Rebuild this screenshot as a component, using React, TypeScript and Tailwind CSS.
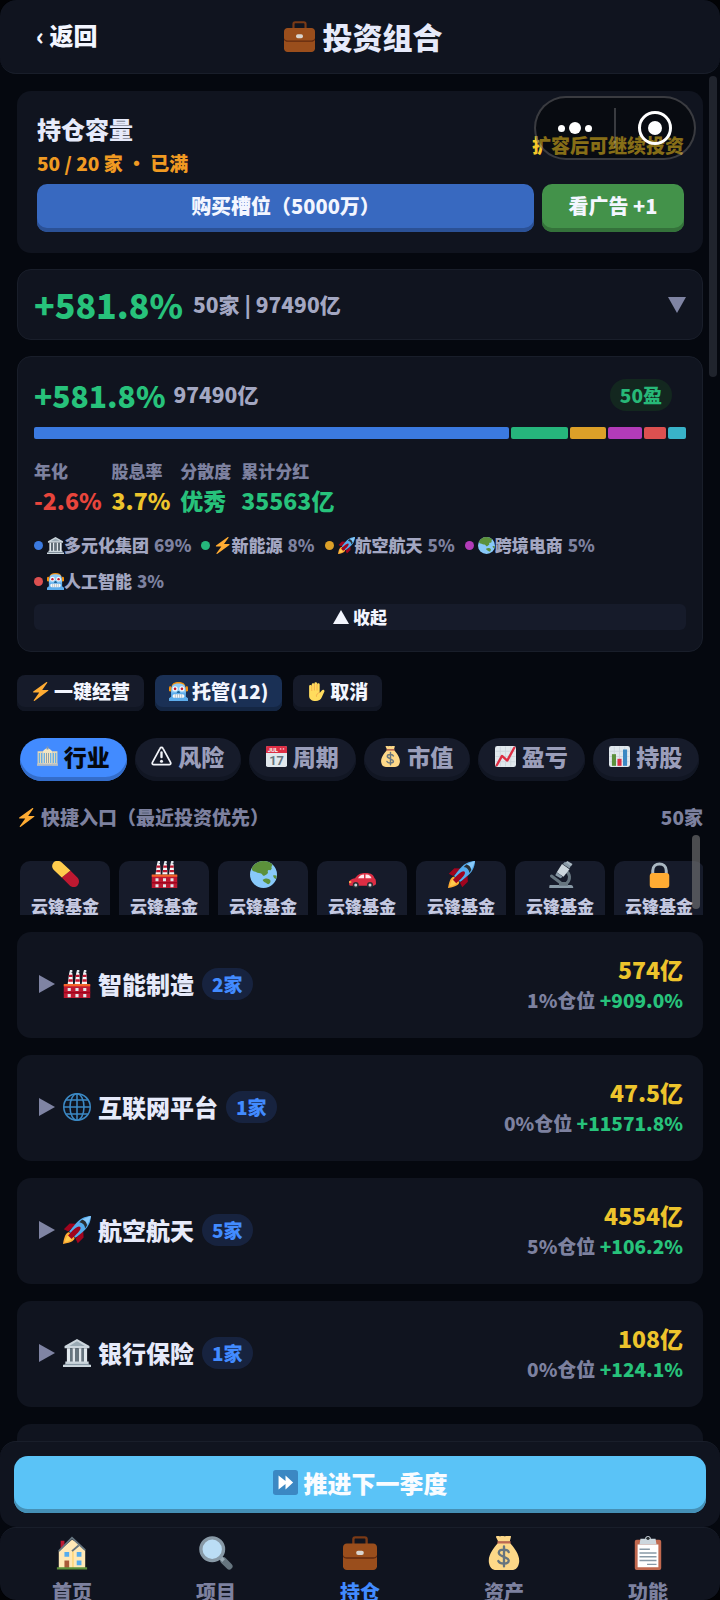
import React, { useState } from "react"
import clsx from "clsx"

type IconProps = {
  name: string
  className?: string
}

const glyphs: Record<string, React.ReactNode> = {
  briefcase: (
    <>
      <path
        fill="none"
        stroke="#7A3A16"
        strokeWidth="2.500"
        d="M11 9V3.500C11 2 12 1.500 13 1.500h10c1 0 2 .5 2 2V9"
      />
      <path fill="#9A4E1C" d="M4 8h28c2 0 4 1.500 4 4v20c0 2.500-2 4-4 4H4c-2 0-4-1.500-4-4V12c0-2.500 2-4 4-4z" />
      <path fill="#622A0F" d="M0 20c1 2 2.500 2.500 4 2.500h28c1.500 0 3-.5 4-2.500v2c-1 1.500-2.500 2-4 2H4c-1.500 0-3-.5-4-2z" />
      <rect x="14" y="15.500" width="8" height="4.500" rx="2" fill="#D9D5D0" />
    </>
  ),
  bank: (
    <>
      <path fill="#CCD6DD" d="M18 0 2 9v3h32V9z" />
      <path fill="#9AAAB4" d="M18 3 8 9h20z" />
      <path fill="#E1E8ED" d="M5 12h4v18H5zM12 12h4v18h-4zM20 12h4v18h-4zM27 12h4v18h-4z" />
      <path fill="#66757F" d="M9 12h3v18H9zM16 12h4v18h-4zM24 12h3v18h-3z" />
      <path fill="#CCD6DD" d="M3 29h30v3H3zM0 33h36v3H0z" />
      <path fill="#8899A6" d="M2 32h32v1.500H2z" />
    </>
  ),
  zap: (
    <path
      fill="#FFAC33"
      d="M32.900 15.600c-.2-.4-.6-.6-1-.6H21.200L30.800 1.600c.3-.4.2-.8-.1-1.200-.4-.4-1-.5-1.400-.2L4.300 18.200c-.4.3-.5.800-.3 1.200.1.400.5.600 1 .6h10.600L5.200 34.400c-.3.400-.3.900.1 1.300.4.300.9.400 1.300.1l26-19.100c.3-.3.500-.7.300-1.100z"
    />
  ),
  rocket: (
    <>
      <path fill="#A0041E" d="M1 17 8.500 9.500 17 10 7 20zM19 35l7.500-7.500L26 19 16 29z" />
      <path fill="#55ACEE" d="M36 0s-10 0-17 7c-5 5-11 13-11 13l8 8s8-6 13-11C36 10 36 0 36 0z" />
      <path fill="#FFAC33" d="M8 21c-3 0-6 3-8 15 12-2 15-5 15-8-2-2-5-5-7-7z" />
      <path fill="#FFCC4D" d="M7.500 24c-2 1-4 4-5 9.500C8 32.500 11 30.500 12 28.500z" />
      <path fill="#A0041E" d="M20.500 13.500c1.500 0 2.500 1 2 3-1 4-8.500 10-11.500 13l-4.500-4.500c3-3 8-10 14-11.500z" />
      <path fill="#292F33" d="M24 5c3-1 6 2 7 7l-2.500 4c-.5-4.500-3-7.500-7.500-8z" />
      <path fill="#88C9F9" d="M25 5c4-3 11-5 11-5s-2 7-5 11c0-3-3-6-6-6z" />
    </>
  ),
  earth: (
    <>
      <circle cx="18" cy="18" r="18" fill="#88C9F9" />
      <path
        fill="#5C913B"
        d="M2 10C5 4 11 0 18 0c5 0 10 2 12 5-1 2-2 3-1 5-1 2-2 3-3 2-2 0-3 1-2 3 0 2-2 3-4 4-1 1-2 1-3 0-1-2-3-3-5-3-3 0-4-2-6-2S3 13 2 10zM17 25c3-2 6-2 8-1 3 1 3 4 1 6-2 2-3 0-5-1s-4-2-4-4zM31 19c2 0 3 0 4.500 1l-1 4c-2-1-4-3-3.500-5z"
      />
    </>
  ),
  robot: (
    <>
      <path fill="#F4900C" d="M18 0C10 0 6 3 5 8h26C30 3 26 0 18 0z" />
      <rect x="0" y="8" width="5" height="10" rx="2.500" fill="#F4900C" />
      <rect x="31" y="8" width="5" height="10" rx="2.500" fill="#F4900C" />
      <path fill="#8CCAF7" d="M8 5c5-3 15-3 20 0 4 3 4 9 4 18H4C4 14 4 8 8 5z" />
      <path fill="#5DADEC" d="M4 20h28v8l4 3v5H0v-5l4-3z" />
      <circle cx="11.500" cy="13" r="5" fill="#F5F8FA" />
      <circle cx="24.500" cy="13" r="5" fill="#F5F8FA" />
      <circle cx="11.500" cy="13" r="2.500" fill="#BE1931" />
      <circle cx="24.500" cy="13" r="2.500" fill="#BE1931" />
      <path fill="#226699" d="M16.500 17h3l2 4h-7z" />
      <rect x="7" y="23" width="22" height="7" rx="3" fill="#F5F8FA" />
      <path stroke="#8899A6" strokeWidth="1" d="M12 23v7M16 23v7M20 23v7M24 23v7" />
    </>
  ),
  hand: (
    <>
      <path
        fill="#FFDC5D"
        d="M4 20V8c0-3 5-3 5 0V4.500c0-3 5-3 5 0V2.500c0-3 5-3 5 0V4.500c0-3 5-3 5 0V21l4-5c2-3 6-1 5 2l-5 11c-2 5-6 7-11 7C8 36 4 32 4 26z"
      />
      <path fill="none" stroke="#EF9645" strokeWidth="1.200" d="M9 8v9M14 4v12M19 4v12M24 20c-4 1-7 4-6 8" />
    </>
  ),
  city: (
    <>
      <path fill="#E8D9B5" d="M1 9h9v24H1zM26 9h9v24h-9z" />
      <path fill="#F3E5C2" d="M10 9c2-3 5-4 8-6 3 2 6 3 8 6v23H10z" />
      <path fill="#5DADEC" d="M3 12h2v17H3zM7 12h2v17H7zM11.500 12h2v17h-2zM22.500 12h2v17h-2zM27 12h2v17h-2zM31 12h2v17h-2z" />
      <path fill="#8899A6" d="M15.500 12h1.500v17h-1.500zM19 12h1.500v17H19zM16.500 1h3v5h-3z" />
      <path fill="#B6BEC5" d="M0 30h36v4H0z" />
    </>
  ),
  warning: (
    <>
      <path
        fill="none"
        stroke="#F3F5FA"
        strokeWidth="3"
        strokeLinejoin="round"
        d="M15.500 4c1-2 4-2 5 0l13 24c1 2 0 4-2.500 4H5c-2.500 0-3.500-2-2.500-4z"
      />
      <path stroke="#F3F5FA" strokeWidth="4" strokeLinecap="round" d="M18 11v8" />
      <circle cx="18" cy="26" r="2.600" fill="#F3F5FA" />
    </>
  ),
  calendar: (
    <>
      <rect width="36" height="36" rx="3" fill="#E1E8ED" />
      <path fill="#DD2E44" d="M3 0h30c2 0 3 1.500 3 3v9H0V3c0-1.500 1-3 3-3z" />
      <circle cx="25" cy="5" r="1.500" fill="#F4ABBA" />
      <circle cx="30" cy="5" r="1.500" fill="#F4ABBA" />
      <text x="3" y="10" fill="#F5F8FA" fontSize="10" fontWeight="700" fontFamily="Roboto, sans-serif">
        JUL
      </text>
      <text
        x="18"
        y="32"
        fill="#66757F"
        fontSize="22"
        fontWeight="700"
        textAnchor="middle"
        fontFamily="Roboto, sans-serif"
      >
        17
      </text>
    </>
  ),
  money: (
    <>
      <path fill="#FDD888" d="M10 0c2-1 3 1 5 0s3 1 5 0 4-1 5.500.5L24 6H12L9.500 1z" />
      <path fill="#FDD888" d="M12 7h12c5 6 11 13 10 21-1 5-3 8-8 8H10c-5 0-7-3-8-8C1 20 7 13 12 7z" />
      <path fill="#BF6952" d="M11 5.500h14V8H11z" />
      <path
        fill="none"
        stroke="#67757F"
        strokeWidth="2.500"
        strokeLinecap="round"
        d="M18 11v21M23 17c-1-3-10-4-10.500.5S23 22 23 26s-9 4.500-11 .5"
      />
    </>
  ),
  trend: (
    <>
      <rect width="36" height="36" rx="4" fill="#E1E8ED" />
      <path stroke="#CCD6DD" strokeWidth="1.500" d="M9 1v34M18 1v34M27 1v34M1 9h34M1 18h34M1 27h34" />
      <path
        fill="none"
        stroke="#DD2E44"
        strokeWidth="4"
        strokeLinejoin="round"
        strokeLinecap="round"
        d="M3 33 12 17l9 8L33 3"
      />
    </>
  ),
  bars: (
    <>
      <rect width="36" height="36" rx="4" fill="#E1E8ED" />
      <path stroke="#CCD6DD" strokeWidth="1.500" d="M9 1v34M18 1v34M27 1v34M1 9h34M1 18h34M1 27h34" />
      <path fill="#5C913B" d="M5 14h7v20H5z" />
      <path fill="#DD2E44" d="M14.500 22h7v12h-7z" />
      <path fill="#3B88C3" d="M24 6h7v28h-7z" />
    </>
  ),
  pill: (
    <>
      <path fill="#BE1931" d="m24.500 12.500 9 9c3.500 3.500 3 8 .5 11s-8 3-11-.5l-10-10z" />
      <path fill="#FFCC4D" d="M13 22 2.500 12C-.5 9-.5 5 2 2s8-3 11 0l11.500 10.500z" />
    </>
  ),
  factory: (
    <>
      <path fill="#F5F8FA" d="M8 4h4l1 14H6zM17 4h4l1 14h-7zM26 4h4l1 14h-7z" />
      <path
        fill="#BE1931"
        d="M7.500 6h4.800v3H7.300zM7 12h5.600v3H6.800zM16.500 6h4.800v3h-5zM16 12h5.600v3h-5.800zM25.500 6h4.800v3h-5zM25 12h5.600v3h-5.800z"
      />
      <path fill="#E1E8ED" d="M9 0h3v3l-2 1H8zM18 0h3v3l-2 1h-2zM27 0h3v3l-2 1h-2z" />
      <path fill="#BE1931" d="M1 19h34v17H1z" />
      <path fill="#A0041E" d="M1 28h34v2H1z" />
      <path fill="#F4642B" d="M1 18h34v3H1z" />
      <path
        fill="#E1E8ED"
        d="M6 23h4v4H6zM16 23h4v4h-4zM26 23h4v4h-4zM6 31h4v4H6zM16 31h4v4h-4zM26 31h4v4h-4z"
      />
    </>
  ),
  car: (
    <g transform="translate(0 5)">
      <path fill="#DD2E44" d="M0 24c0-4 4-5 8-6 3-4 6-7 14-7s11 3 12 7c2 1 2 4 2 8l-3 2H2c-2 0-2-2-2-4z" />
      <path fill="#FFE8EC" d="M12 18c2-3 4-5 8-5v5zM22 13c5-.5 7 2 8 5h-8z" />
      <circle cx="9" cy="27" r="4" fill="#292F33" />
      <circle cx="9" cy="27" r="2" fill="#CCD6DD" />
      <circle cx="28" cy="27" r="4" fill="#292F33" />
      <circle cx="28" cy="27" r="2" fill="#CCD6DD" />
      <path fill="#FFCC4D" d="M0 22h3v2H0z" />
    </g>
  ),
  microscope: (
    <>
      <path fill="none" stroke="#66757F" strokeWidth="4" d="M25 13c6 4 7 11 1 17" />
      <path fill="#8899A6" d="M4 32h28c1.500 0 3 1.500 3 4H3c0-2 0-4 1-4z" />
      <path stroke="#66757F" strokeWidth="4" strokeLinecap="round" d="m6 20 12 9" />
      <path fill="#66757F" d="M16 28h12v5H16z" />
      <path fill="#CCD6DD" d="M20 4l10 7-8 10-9-6z" />
      <path fill="#8899A6" d="m24 1 8 5-2 4-9-6zM13 15l8 6-3 2-7-4z" />
      <path fill="#AAB8C2" d="m27 0 7 4-2 3-7-5z" />
    </>
  ),
  lock: (
    <>
      <path fill="none" stroke="#AAB8C2" strokeWidth="4" d="M9 19v-6c0-12 18-12 18 0v6" />
      <rect x="5" y="16" width="26" height="20" rx="4" fill="#FFAC33" />
    </>
  ),
  globe: (
    <g fill="none" stroke="#3B88C3" strokeWidth="2">
      <circle cx="18" cy="18" r="17" />
      <ellipse cx="18" cy="18" rx="9" ry="17" />
      <path d="M18 1v34M1 18h34M4 9h28M4 27h28" />
    </g>
  ),
  forward: (
    <>
      <rect width="36" height="36" rx="4" fill="#3B88C3" />
      <path fill="#fff" d="M8 8l10 8V8l11 10-11 10v-8L8 28z" />
    </>
  ),
  house: (
    <>
      <path fill="#BE1931" d="M6 5h4v8H6z" />
      <path fill="#FFE8B6" d="M18 4 4 16v18h28V15L24 7z" />
      <path fill="#FFD983" d="M18 16h2v18h-2z" />
      <path fill="none" stroke="#66757F" strokeWidth="2" d="M4 16 18 2l14 13M18 16l7-6" />
      <path fill="#55ACEE" d="M10 17h5v5h-5zM23 17h5v5h-5zM23 26h5v5h-5z" />
      <path fill="#A85A3A" d="M10 26h5v8h-5z" />
      <path fill="#5C913B" d="M2 33h32v2.500H2z" />
    </>
  ),
  search: (
    <>
      <path stroke="#66757F" strokeWidth="7" strokeLinecap="round" d="m26 26 6 6" />
      <path stroke="#9AAAB4" strokeWidth="4" d="m21 21 5 5" />
      <circle cx="14" cy="14" r="12" fill="#BBDDF5" stroke="#8899A6" strokeWidth="3.500" />
    </>
  ),
  clipboard: (
    <>
      <rect x="4" y="4" width="28" height="32" rx="2" fill="#C1694F" />
      <path fill="#fff" d="M7 9h22v24H7z" />
      <path fill="#CCD6DD" d="M10 3h5c0-4 6-4 6 0h5l1 6H9z" />
      <circle cx="18" cy="2.500" r="1.800" fill="#292F33" />
      <path stroke="#8899A6" strokeWidth="1.500" d="M9 14h11M9 18h18M9 22h18M9 26h18M17 30h10" />
    </>
  ),
}

const Icon: React.FC<IconProps> = ({ name, className }) => (
  <svg viewBox="0 0 36 36" className={clsx("shrink-0", className)} aria-hidden="true">
    {glyphs[name]}
  </svg>
)

const allocation = [
  { weight: 476, color: "bg-[#3b7ae0]" },
  { weight: 58, color: "bg-[#26b67c]" },
  { weight: 36, color: "bg-[#dca028]" },
  { weight: 34, color: "bg-[#b23bb8]" },
  { weight: 22, color: "bg-[#dc5050]" },
  { weight: 18, color: "bg-[#39b3c9]" },
]

const stats = [
  { label: "年化", value: "-2.6%", color: "text-[#e8453c]" },
  { label: "股息率", value: "3.7%", color: "text-[#edc42c]" },
  { label: "分散度", value: "优秀", color: "text-[#27c27b]" },
  { label: "累计分红", value: "35563亿", color: "text-[#27c27b]" },
]

const sectors = [
  { icon: "bank", name: "多元化集团", share: "69%", dot: "bg-[#3b7ae0]" },
  { icon: "zap", name: "新能源", share: "8%", dot: "bg-[#26b67c]" },
  { icon: "rocket", name: "航空航天", share: "5%", dot: "bg-[#dca028]" },
  { icon: "earth", name: "跨境电商", share: "5%", dot: "bg-[#b23bb8]" },
  { icon: "robot", name: "人工智能", share: "3%", dot: "bg-[#dc5050]" },
]

const actions = [
  { icon: "zap", label: "一键经营", on: false },
  { icon: "robot", label: "托管(12)", on: true },
  { icon: "hand", label: "取消", on: false },
]

const tabs = [
  { icon: "city", label: "行业" },
  { icon: "warning", label: "风险" },
  { icon: "calendar", label: "周期" },
  { icon: "money", label: "市值" },
  { icon: "trend", label: "盈亏" },
  { icon: "bars", label: "持股" },
]

const shortcuts = ["pill", "factory", "earth", "car", "rocket", "microscope", "lock"]

const groups = [
  { icon: "factory", name: "智能制造", count: "2家", value: "574亿", share: "1%仓位", gain: "+909.0%" },
  { icon: "globe", name: "互联网平台", count: "1家", value: "47.5亿", share: "0%仓位", gain: "+11571.8%" },
  { icon: "rocket", name: "航空航天", count: "5家", value: "4554亿", share: "5%仓位", gain: "+106.2%" },
  { icon: "bank", name: "银行保险", count: "1家", value: "108亿", share: "0%仓位", gain: "+124.1%" },
]

const navItems = [
  { icon: "house", label: "首页" },
  { icon: "search", label: "项目" },
  { icon: "briefcase", label: "持仓" },
  { icon: "money", label: "资产" },
  { icon: "clipboard", label: "功能" },
]

const Capsule = () => (
  <div className="absolute right-6 top-24 z-20 flex h-16 w-[162px] items-center rounded-full border-2 border-white/20 bg-black/45">
    <button aria-label="更多" className="flex flex-1 items-center justify-center gap-1">
      <span className="h-[7px] w-[7px] rounded-full bg-white" />
      <span className="h-3 w-3 rounded-full bg-white" />
      <span className="h-[7px] w-[7px] rounded-full bg-white" />
    </button>
    <span className="h-10 w-0.5 bg-white/20" />
    <button aria-label="关闭" className="flex flex-1 items-center justify-center">
      <span className="flex h-[34px] w-[34px] items-center justify-center rounded-full border-[3px] border-white">
        <span className="h-3.5 w-3.5 rounded-full bg-white" />
      </span>
    </button>
  </div>
)

const CapacityCard = () => (
  <section className="rounded-[14px] bg-[#10141f] pb-[21px] pl-5 pr-[19px] pt-[22px]">
    <div className="flex items-center justify-between">
      <div>
        <h2 className="text-2xl leading-8 text-[#e6eafa]">持仓容量</h2>
        <p className="mt-1 text-[19px] leading-7 text-[#f09a22]">50 / 20 家 · 已满</p>
      </div>
      <p className="text-[19px] leading-7 text-[#f5c82a]">扩容后可继续投资</p>
    </div>
    <div className="mt-[7px] flex gap-2">
      <button className="h-12 flex-1 rounded-[10px] bg-[#3869c0] pb-1 text-xl text-[#f3f6ff] shadow-[inset_0_-4px_0_#2b5196]">
        购买槽位（5000万）
      </button>
      <button className="h-12 w-[142px] rounded-[10px] bg-[#43924a] pb-1 text-xl text-[#f3f6ff] shadow-[inset_0_-4px_0_#34723a]">
        看广告 +1
      </button>
    </div>
  </section>
)

const SummaryBar = () => (
  <button className="mt-4 flex h-[71px] items-center rounded-[14px] border border-[#191e2a] bg-[#10141f] px-4 text-left">
    <span className="text-[34px] text-[#27c27b]">+581.8%</span>
    <span className="ml-2.5 text-[21px] text-[#a3a7c2]">50家 | 97490亿</span>
    <svg viewBox="0 0 18 16" className="ml-auto h-4 w-[18px]" aria-hidden="true">
      <path fill="#7f84a3" d="M0 0h18L9 16z" />
    </svg>
  </button>
)

const PortfolioCard = () => (
  <section className="mt-4 rounded-[14px] border border-[#191e2a] bg-[#10141f] px-4 pb-[21px] pt-[22px]">
    <div className="flex h-8 items-center">
      <span className="text-[30px] text-[#27c27b]">+581.8%</span>
      <span className="ml-2 text-[21px] text-[#a3a7c2]">97490亿</span>
      <span className="ml-auto mr-3.5 rounded-full bg-[#13271f] px-2.5 text-[19px] leading-8 text-[#27b878]">50盈</span>
    </div>

    <div className="mt-4 flex h-3 gap-0.5">
      {allocation.map((x) => (
        <div key={x.color} className={clsx("rounded-xs", x.color)} style={{ flexGrow: x.weight, flexBasis: 0 }} />
      ))}
    </div>

    <dl className="mt-5 flex gap-2.5">
      {stats.map((x) => (
        <div key={x.label}>
          <dt className="text-[17px] leading-6 text-[#7d819f]">{x.label}</dt>
          <dd className={clsx("mt-0.5 text-[23px] leading-[30px]", x.color)}>{x.value}</dd>
        </div>
      ))}
    </dl>

    <ul className="mt-[18px] flex flex-wrap gap-x-2.5 gap-y-3">
      {sectors.map((x) => (
        <li key={x.name} className="flex items-center text-[17px] leading-6 text-[#a3a7c2]">
          <span className={clsx("mr-1 h-[9px] w-[9px] rounded-full", x.dot)} />
          <Icon name={x.icon} className="h-[17px] w-[17px]" />
          {x.name}
          <span className="ml-[5px] text-[#7d819f]">{x.share}</span>
        </li>
      ))}
    </ul>

    <button className="mt-[11px] flex h-[26px] w-full items-center justify-center gap-1 rounded-md bg-[#161b2a] text-[17px] text-[#f3f6ff]">
      <svg viewBox="0 0 16 14" className="h-3.5 w-4" aria-hidden="true">
        <path fill="currentColor" d="M8 0l8 14H0z" />
      </svg>
      收起
    </button>
  </section>
)

const App = () => {
  const [activeTab, setActiveTab] = useState("行业")

  return (
    <div className="bg-[#020306] font-['Noto_Sans_CJK_SC',sans-serif] font-black">
      <div className="relative flex h-screen flex-col overflow-hidden rounded-2xl bg-[#05080f]">
        <header className="relative flex h-[74px] shrink-0 items-center justify-center rounded-2xl border-b border-[#191e2a] bg-[#10141f] pl-1.5">
          <button className="absolute bottom-4 left-9 top-3 text-2xl text-[#f3f6ff]">‹ 返回</button>
          <h1 className="flex items-center gap-2 text-[30px] text-[#e6eafa]">
            <Icon name="briefcase" className="h-[31px] w-[31px]" />
            投资组合
          </h1>
        </header>

        <Capsule />
        <div className="absolute right-[3px] top-[76px] h-[301px] w-2 rounded-full bg-[#20242d]" />

        <main className="flex min-h-0 flex-1 flex-col overflow-hidden px-[17px] pt-[17px] *:shrink-0">
          <CapacityCard />
          <SummaryBar />
          <PortfolioCard />

          <div className="mt-[23px] flex gap-[11px]">
            {actions.map((x) => (
              <button
                key={x.label}
                className={clsx(
                  "flex h-9 items-center gap-1 rounded-lg px-3.5 pb-1 text-[19px] text-[#f3f6ff]",
                  x.on
                    ? "bg-[#1a3055] shadow-[inset_0_-4px_0_#142643]"
                    : "bg-[#161b2a] shadow-[inset_0_-4px_0_#111623]"
                )}
              >
                <Icon name={x.icon} className="h-[19px] w-[19px]" />
                {x.label}
              </button>
            ))}
          </div>

          <div className="mt-[27px] flex gap-2 pl-[3px] pr-1">
            {tabs.map((x) => (
              <button
                key={x.label}
                onClick={() => setActiveTab(x.label)}
                className={clsx(
                  "flex h-[43px] flex-1 items-center justify-center gap-1.5 rounded-full pb-1.5 text-[23px]",
                  activeTab === x.label
                    ? "bg-[#428bff] text-[#05080f] shadow-[inset_0_-4px_0_#346dca]"
                    : "bg-[#161b2a] text-[#9a9eba] shadow-[inset_0_-4px_0_#111623]"
                )}
              >
                <Icon name={x.icon} className="h-[21px] w-[21px]" />
                {x.label}
              </button>
            ))}
          </div>

          <div className="mt-[22px] flex items-center justify-between text-[19px] leading-7 text-[#7d819f]">
            <h2 className="flex items-center gap-[5px]">
              <Icon name="zap" className="h-[19px] w-[19px]" />
              快捷入口（最近投资优先）
            </h2>
            <span>50家</span>
          </div>

          <div className="relative mt-1 h-20 overflow-hidden pl-[3px] pt-[26px]">
            <div className="flex gap-[9px]">
              {shortcuts.map((x) => (
                <button
                  key={x}
                  className="flex h-20 w-[90px] shrink-0 flex-col items-center rounded-[10px] bg-[#161b2a] text-[17px] leading-6 text-[#c3c8e0]"
                >
                  <Icon name={x} className="mb-1.5 h-[27px] w-[27px]" />
                  云锋基金
                </button>
              ))}
            </div>
            <div className="absolute right-[3px] top-0 h-[74px] w-2 rounded-full bg-[#7a7a7a]/60" />
          </div>

          <div className="mt-[17px] flex flex-col gap-[17px]">
            {groups.map((x) => (
              <button key={x.name} className="flex h-[106px] items-center rounded-[14px] bg-[#10141f] px-5 pb-0.5 text-left">
                <svg viewBox="0 0 16 18" className="ml-0.5 mr-2 h-[18px] w-4" aria-hidden="true">
                  <path fill="#7f84a3" d="M0 0l16 9-16 9z" />
                </svg>
                <Icon name={x.icon} className="h-7 w-7" />
                <span className="ml-[7px] text-2xl text-[#e6eafa]">{x.name}</span>
                <span className="ml-2 rounded-full bg-[#17233f] px-2.5 text-[19px] leading-8 text-[#428bff]">
                  {x.count}
                </span>
                <span className="ml-auto text-right">
                  <span className="mb-0.5 block text-[23px] leading-[30px] text-[#edc42c]">{x.value}</span>
                  <span className="block text-[19px] leading-7 text-[#7d819f]">
                    {x.share} <span className="text-[#27c27b]">{x.gain}</span>
                  </span>
                </span>
              </button>
            ))}
            <div className="h-[106px] rounded-[14px] bg-[#10141f]" />
          </div>
        </main>

        <div className="relative -mt-4 shrink-0 rounded-2xl border-t border-[#191e2a] bg-[#10141f] p-3.5">
          <button className="flex h-[57px] w-full items-center justify-center gap-1.5 rounded-[14px] bg-[#5ac3f7] pb-1 text-2xl text-[#fafcff] shadow-[inset_0_-4px_0_#4590b6]">
            <Icon name="forward" className="h-[25px] w-[25px]" />
            推进下一季度
          </button>
        </div>

        <nav className="flex h-[73px] shrink-0 overflow-hidden rounded-2xl border-t border-[#191e2a] bg-[#10141f] pt-2">
          {navItems.map((x) => (
            <a
              key={x.label}
              href="#"
              className={clsx(
                "flex flex-1 flex-col items-center text-xl leading-7",
                x.label === "持仓" ? "text-[#428bff]" : "text-[#7d819f]"
              )}
            >
              <Icon name={x.icon} className="mb-2 h-[34px] w-[34px]" />
              {x.label}
            </a>
          ))}
        </nav>
      </div>
    </div>
  )
}

export default App
